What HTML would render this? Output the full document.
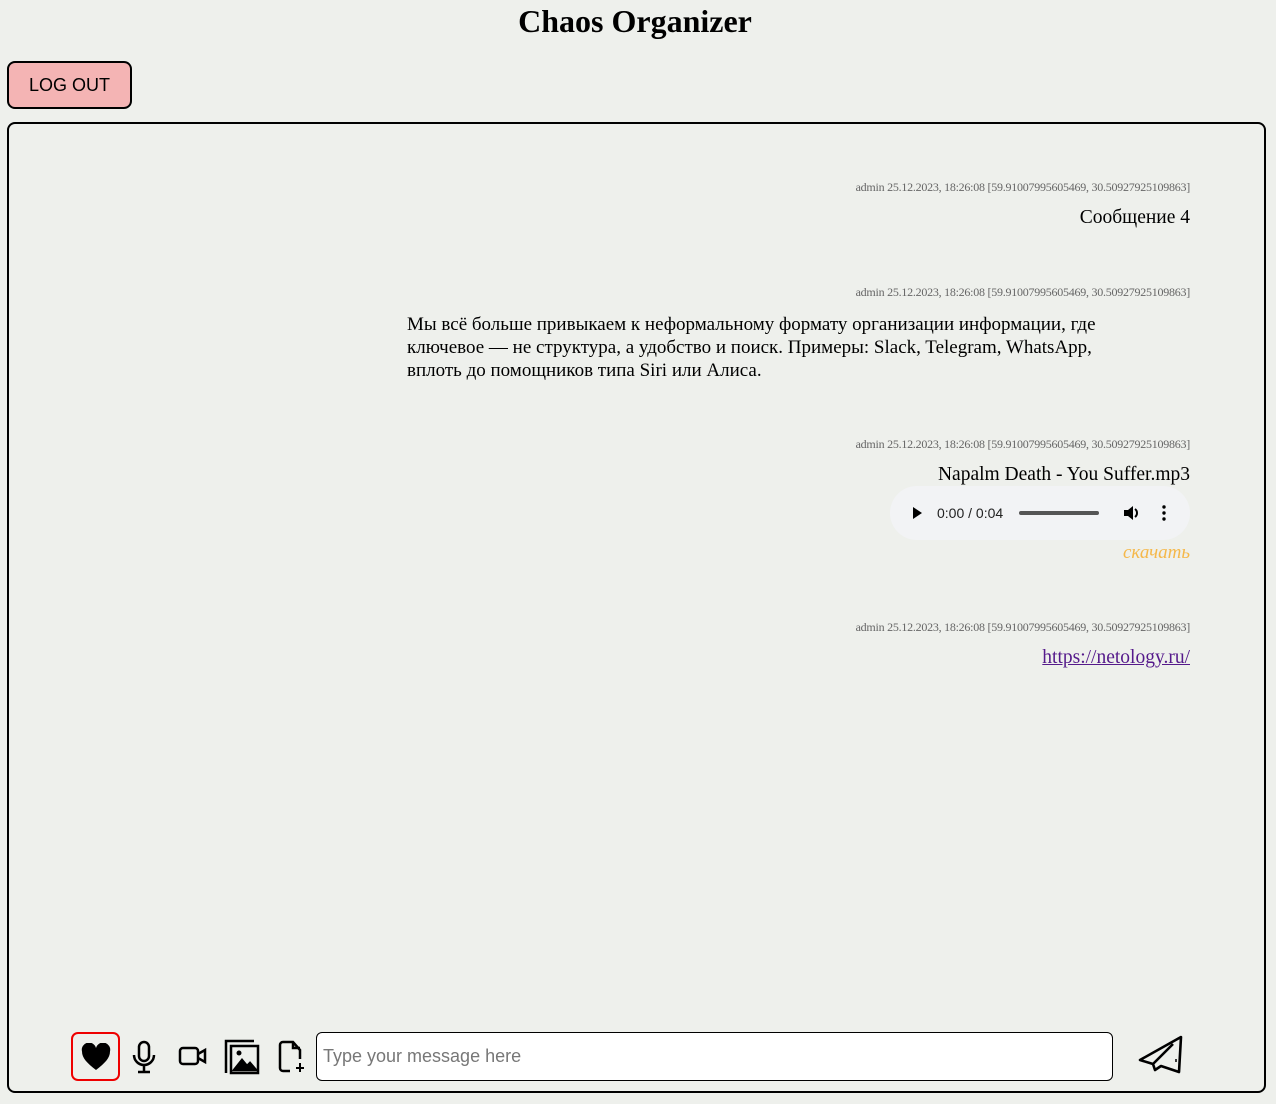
<!DOCTYPE html>
<html><head><meta charset="utf-8"><style>
body{margin:0;background:#eef0ec;width:1276px;height:1104px;position:relative;font-family:"Liberation Serif",serif;overflow:hidden}
h1{position:absolute;top:1px;left:0;width:1270px;margin:0;text-align:center;font-size:32px;line-height:40px;font-weight:bold}
.btn{position:absolute;left:7px;top:61px;width:121px;height:44px;border:2px solid #000;border-radius:8px;background:#f4b4b4;font:18px "Liberation Sans",sans-serif;line-height:44px;text-align:center;box-sizing:content-box}
.box{position:absolute;left:7px;top:122px;width:1255px;height:967px;border:2px solid #000;border-radius:8px}
.meta{position:absolute;right:86px;font-size:12px;letter-spacing:-0.25px;color:#666;white-space:nowrap}
.t{position:absolute;right:86px;font-size:19.5px;white-space:nowrap}
.p{position:absolute;left:407px;width:735px;font-size:19px;line-height:23px}
.audio{position:absolute;left:890px;top:486px;width:300px;height:54px;border-radius:27px;background:#f2f3f5;font:14px "Liberation Sans",sans-serif;color:#222}
a{color:#551a8b}
.inp{position:absolute;left:316px;top:1032px;width:797px;height:49px;border:1px solid #000;border-radius:6px;background:#fff;font:18px "Liberation Sans",sans-serif;color:#777;line-height:47px;padding-left:6px;box-sizing:border-box}
.heart{position:absolute;left:71px;top:1032px;width:45px;height:45px;border:2px solid #e00;border-radius:7px}
</style></head><body>
<h1>Chaos Organizer</h1>
<div class="btn">LOG OUT</div>
<div class="box"></div>
<div class="meta" style="top:180px">admin 25.12.2023, 18:26:08 [59.91007995605469, 30.50927925109863]</div>
<div class="t" style="top:207px">Сообщение 4</div>
<div class="meta" style="top:285px">admin 25.12.2023, 18:26:08 [59.91007995605469, 30.50927925109863]</div>
<div class="p" style="top:313px">Мы всё больше привыкаем к неформальному формату организации информации, где ключевое — не структура, а удобство и поиск. Примеры: Slack, Telegram, WhatsApp, вплоть до помощников типа Siri или Алиса.</div>
<div class="meta" style="top:437px">admin 25.12.2023, 18:26:08 [59.91007995605469, 30.50927925109863]</div>
<div class="t" style="top:464px">Napalm Death - You Suffer.mp3</div>
<div class="audio">
<svg style="position:absolute;left:22px;top:21px" width="10" height="12"><path d="M1 0L10 6L1 12Z"/></svg>
<span style="position:absolute;left:47px;top:19px">0:00 / 0:04</span>
<div style="position:absolute;left:129px;top:25px;width:80px;height:4px;border-radius:2px;background:#555"></div>
<svg style="position:absolute;left:233px;top:19px" width="18" height="16"><path d="M1 5h4l5-4v14l-5-4H1z"/><path d="M12 4a5 5 0 0 1 0 8" stroke="#000" stroke-width="2" fill="none"/></svg>
<svg style="position:absolute;left:271px;top:19px" width="6" height="16"><circle cx="3" cy="2" r="1.7"/><circle cx="3" cy="8" r="1.7"/><circle cx="3" cy="14" r="1.7"/></svg>
</div>
<div class="t" style="top:542px;font-style:italic;color:#f5b84a;font-size:19px">скачать</div>
<div class="meta" style="top:620px">admin 25.12.2023, 18:26:08 [59.91007995605469, 30.50927925109863]</div>
<div class="t" style="top:647px"><a href="#">https://netology.ru/</a></div>
<div class="heart"><svg style="position:absolute;left:8px;top:9px" width="30" height="28" viewBox="0 0 30 28"><path d="M15 27C6 20 1 15 1 8.5A7 7 0 0 1 15 5a7 7 0 0 1 14 3.5C29 15 24 20 15 27Z"/></svg></div>
<svg style="position:absolute;left:131px;top:1040px" width="26" height="34" viewBox="0 0 26 34" fill="none" stroke="#000" stroke-width="2.5"><rect x="8" y="2" width="10" height="19" rx="5"/><path d="M3 15a10 10 0 0 0 20 0M13 25v7M7 32h12"/></svg>
<svg style="position:absolute;left:178px;top:1045px" width="30" height="22" viewBox="0 0 30 22" fill="none" stroke="#000" stroke-width="2.5"><rect x="2" y="3" width="18" height="16" rx="3"/><path d="M20 9l7-4v12l-7-4"/></svg>
<svg style="position:absolute;left:224px;top:1039px" width="36" height="36" viewBox="0 0 36 36" fill="none" stroke="#000" stroke-width="2.5"><path d="M2 34V2h28"/><rect x="7" y="7" width="27" height="27"/><path d="M10 31l8-10 5 6 3-3 6 7z" fill="#000"/><circle cx="15" cy="14" r="2.5" fill="#000" stroke="none"/></svg>
<svg style="position:absolute;left:278px;top:1040px" width="28" height="34" viewBox="0 0 28 34" fill="none" stroke="#000" stroke-width="2.5"><path d="M12 31H5a3 3 0 0 1-3-3V5a3 3 0 0 1 3-3h10l7 8v9"/><path d="M15 2v6h7" /><path d="M22 23v9M18 28h8" stroke-width="2"/></svg>
<div class="inp">Type your message here</div>
<svg style="position:absolute;left:1138px;top:1035px" width="46" height="42" viewBox="0 0 46 42" fill="none" stroke="#000" stroke-width="2.6" stroke-linejoin="round"><path d="M43 2L2 25l13 4 2 6 6-4 18 6z"/><path d="M15 29l20-20"/><path d="M38 24v3" stroke-width="1.5"/></svg>
</body></html>
